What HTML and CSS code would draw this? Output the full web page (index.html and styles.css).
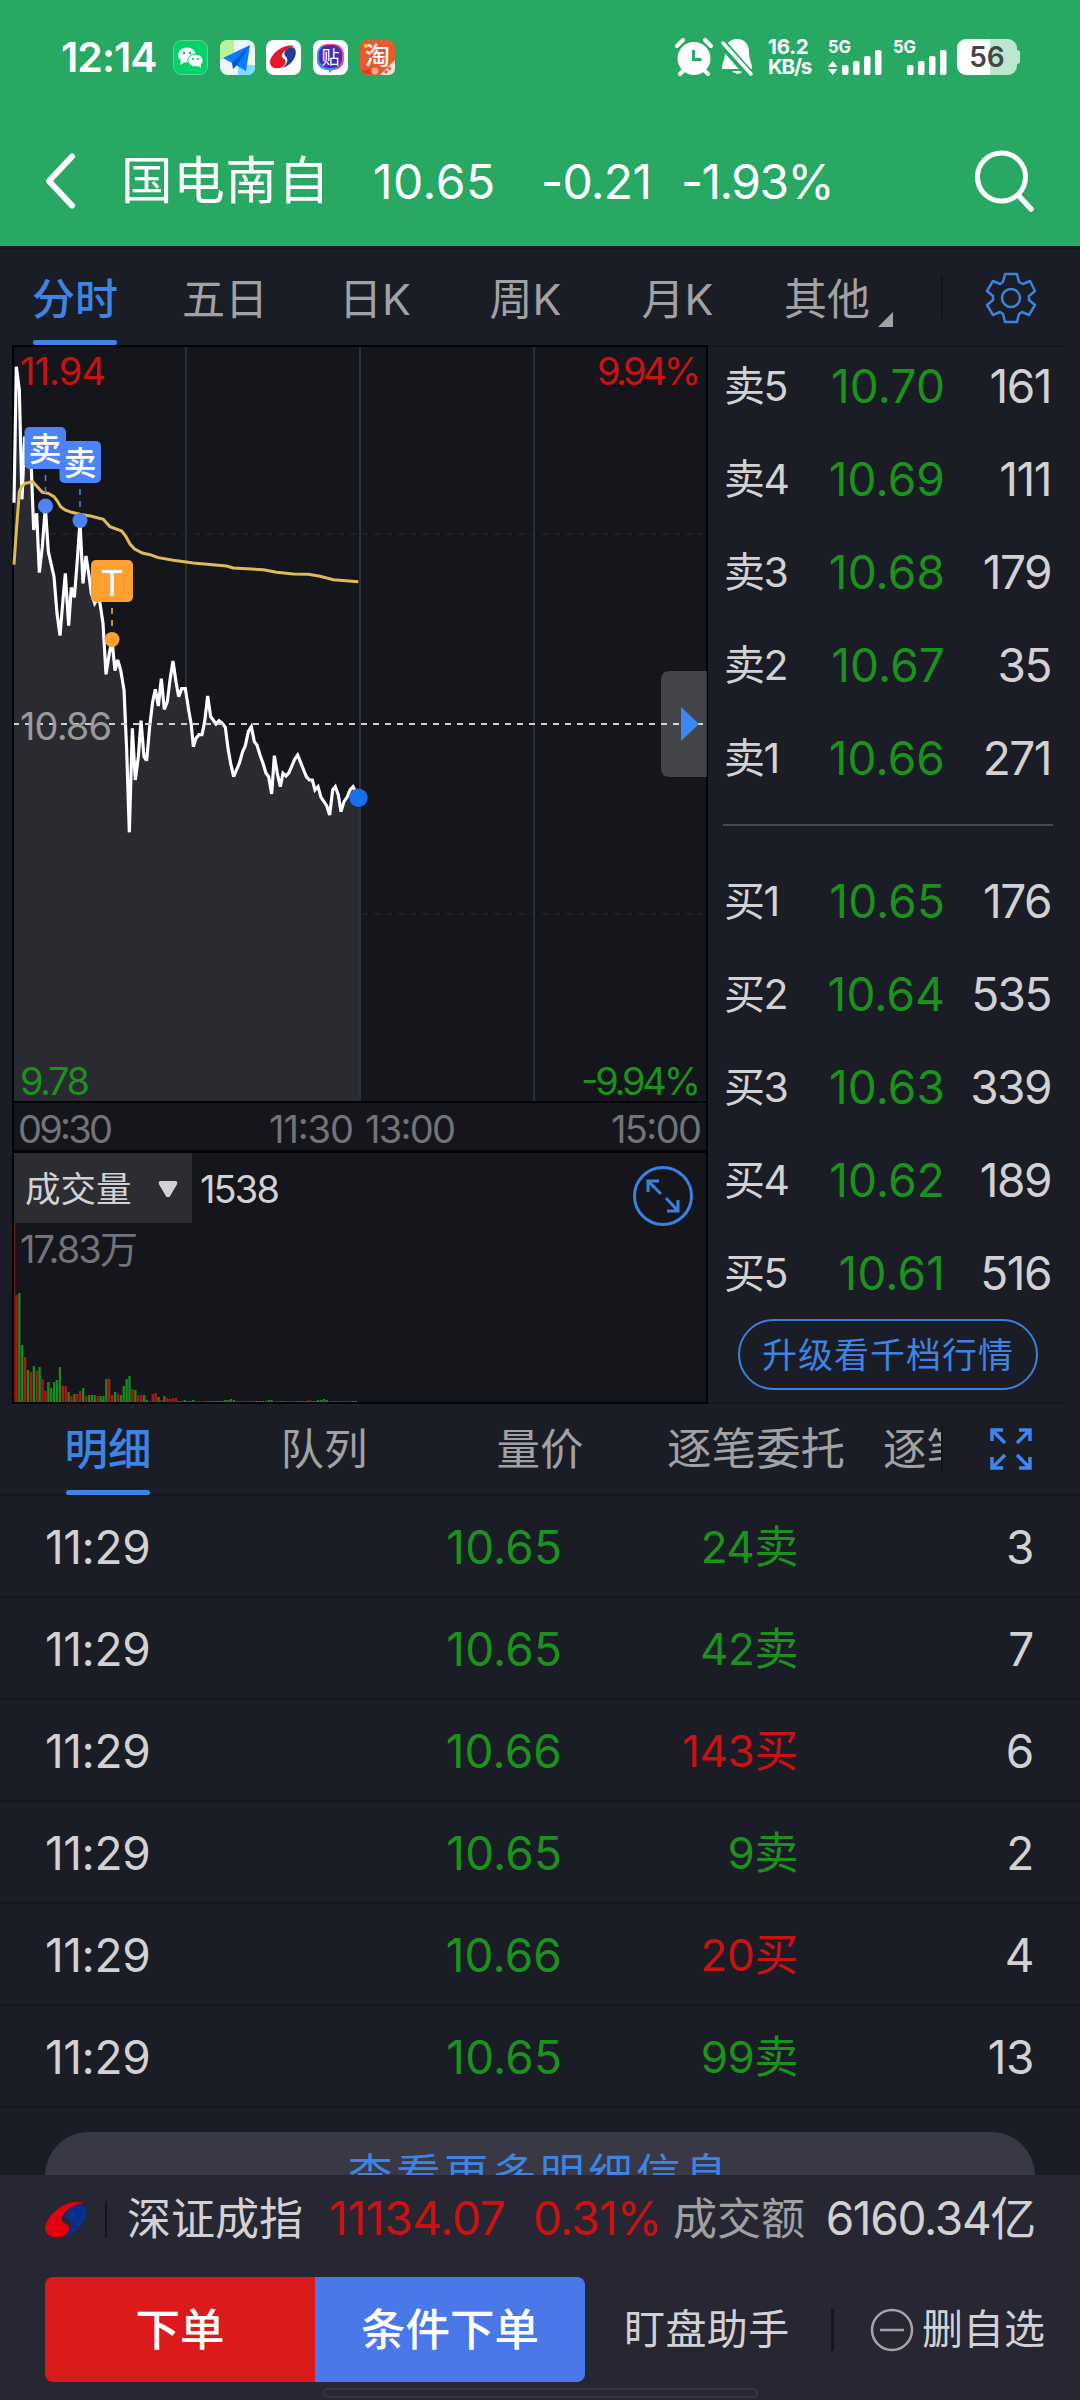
FILE: index.html
```html
<!DOCTYPE html>
<html lang="zh-CN">
<head>
<meta charset="utf-8">
<title>国电南自</title>
<link rel="stylesheet" href="styles.css">
</head>
<body>
<header class="top">
  <div class="status">
    <span class="clock">12:14</span>
    <div class="apps">
      <svg width="35" height="35" viewBox="0 0 35 35"><rect x=".5" y=".5" width="34" height="34" rx="8" fill="#05d16a" stroke="#4fdc93"/><ellipse cx="14" cy="15" rx="9" ry="7.6" fill="#fff"/><path d="M8 20l-1 5 5-3z" fill="#fff"/><ellipse cx="22.500" cy="20.500" rx="7.600" ry="6.400" fill="#fff" stroke="#05d16a"/><path d="M25 26l3 2-.5-4z" fill="#fff"/><g fill="#05b85c"><circle cx="11" cy="13" r="1.200"/><circle cx="17" cy="13" r="1.200"/><circle cx="20" cy="19" r="1"/><circle cx="25" cy="19" r="1"/></g></svg>
      <svg width="35" height="35" viewBox="0 0 35 35"><rect width="35" height="35" rx="8" fill="#eef5f7"/><path d="M8 0H14V14L0 20V8Q0 0 8 0z" fill="#b9f29c"/><path d="M18 25H35V27Q35 35 27 35H18z" fill="#7ddcff"/><path d="M30 5L3 18l9 5 14 8z" fill="#0a7cff"/><path d="M30 5L12 23l1 6 4-4z" fill="#0757c9"/></svg>
      <svg width="35" height="35" viewBox="0 0 35 35"><rect width="35" height="35" rx="8" fill="#fff"/><path d="M29 6C18 3 5 13 4 22c0 8 12 8 15 2 2-4-1-5-3-7-2-4 7-10 13-11z" fill="#e9152b"/><path d="M26 7c8 2 3 18-10 21 5-4 7-8 4-11-4-4 0-9 6-10z" fill="#213c95"/></svg>
      <svg width="35" height="35" viewBox="0 0 35 35"><rect width="35" height="35" rx="8" fill="#fff"/><path d="M14 28h7l-4 5z" fill="#39a0ff"/><rect x="4" y="4" width="27" height="26" rx="10" fill="#ff4f78"/><rect x="4" y="5" width="25" height="25" rx="10" fill="#3b8cff"/><rect x="6" y="5" width="23" height="23" rx="9" fill="#4a2bb5"/><text x="17.500" y="24" text-anchor="middle" class="app-text" font-size="18">贴</text></svg>
      <svg width="35" height="35" viewBox="0 0 35 35"><rect width="35" height="35" rx="8" fill="#e9592b"/><text x="17.500" y="25" text-anchor="middle" class="app-text" font-size="25" font-weight="500">淘</text><path d="M20 35L35 20v8q0 7-7 7z" fill="#f6e3dc"/><path d="M25 33l7-7" stroke="#e2603c" stroke-width="3" stroke-dasharray="3 2"/><path d="M2 31q8-4 18 3H8q-4 0-6-3z" fill="#e8341f"/><circle cx="15" cy="31" r="3.500" fill="#e6ad8c"/><circle cx="6" cy="6" r="2" fill="#ffc638"/></svg>
    </div>
    <div class="sys">
      <svg class="alarm" width="38" height="38" viewBox="0 0 38 38"><circle cx="19" cy="20.500" r="16.500" fill="#fff"/><path d="M2 8l6-6M36 8l-6-6M5 36l4-4M33 36l-4-4" stroke="#fff" stroke-width="4" stroke-linecap="round"/><path d="M18.500 12v9.500h8" fill="none" stroke="#27a863" stroke-width="3.200"/></svg>
      <svg class="bell" width="32" height="38" viewBox="0 0 32 38"><path d="M16 1c8 0 12 6 12 13 0 8 3 10 3 17H1c0-7 3-9 3-17C4 7 8 1 16 1z" fill="#fff"/><path d="M11 33h11q-5 6-11 0z" fill="#fff"/><path d="M-1 3l31 35" stroke="#27a863" stroke-width="9"/><path d="M2 5l28 31" stroke="#fff" stroke-width="3.500" stroke-linecap="round"/></svg>
      <div class="rate"><span>16.2</span><span>KB/s</span></div>
      <svg class="sim" width="54" height="36" viewBox="0 0 54 36"><text x="0" y="14" class="net" textLength="23" lengthAdjust="spacingAndGlyphs">5G</text><path d="M0 28l4.700-6 4.700 6zM0 30l4.700 6 4.700-6z" fill="#fff"/><g fill="#fff"><rect x="14" y="26" width="6.500" height="10" rx="2"/><rect x="25" y="22" width="6.500" height="14" rx="2"/><rect x="36" y="17" width="6.500" height="19" rx="2"/><rect x="47" y="11" width="6.500" height="25" rx="2"/></g></svg>
      <svg class="sim" width="54" height="36" viewBox="0 0 54 36"><text x="0" y="14" class="net" textLength="23" lengthAdjust="spacingAndGlyphs">5G</text><g fill="#fff"><rect x="14" y="26" width="6.500" height="10" rx="2"/><rect x="25" y="22" width="6.500" height="14" rx="2"/><rect x="36" y="17" width="6.500" height="19" rx="2"/><rect x="47" y="11" width="6.500" height="25" rx="2"/></g></svg>
      <div class="battery">56</div>
    </div>
  </div>
  <div class="title">
    <svg class="back" width="32" height="56" viewBox="0 0 32 56"><path d="M27 3.500L4 28l23 24.500" fill="none" stroke="#fff" stroke-width="6" stroke-linecap="round" stroke-linejoin="round"/></svg>
    <span class="name">国电南自</span>
    <span class="t-price">10.65</span>
    <span class="t-chg">-0.21</span>
    <span class="t-pct">-1.93%</span>
    <svg class="search" width="62" height="64" viewBox="0 0 62 64"><circle cx="27.500" cy="28" r="24" fill="none" stroke="#fff" stroke-width="5"/><path d="M45 47l12 13" stroke="#fff" stroke-width="5.500" stroke-linecap="round"/></svg>
  </div>
</header>

<nav class="tabs">
  <span class="tab active">分时</span><span class="tab">五日</span><span class="tab">日K</span><span class="tab">周K</span><span class="tab">月K</span><span class="tab other">其他</span>
  <span class="gear">
    <svg width="50" height="52" viewBox="-25 -26 50 52" fill="none" stroke="#3d82df" stroke-width="2.500" stroke-linejoin="round"><path d="M-6 -24H6L8 -16L12 -14L19 -17L24 -7L18 -2V2L24 7L18 17L11 14L8 16L6 24H-6L-8 16L-11 14L-18 17L-24 7L-18 2V-2L-24 -7L-18 -17L-11 -14L-8 -16Z"/><circle r="9"/></svg>
  </span>
</nav>

<main class="market">
  <div class="charts">
    <svg class="price-chart" width="696" height="806" viewBox="12 345 696 806">
      <rect x="13" y="346" width="694" height="805" fill="#15161b" stroke="#030409" stroke-width="2"/>
      <path d="M186 347V1101M534 347V1101" stroke="#2a2c37" stroke-width="2"/>
      <path d="M14 534H703M14 914H703" stroke="#22242a" stroke-width="1.500" stroke-dasharray="6 6"/>
      <g transform="translate(0 340) scale(.33333)" fill="none" stroke-linejoin="miter">
        <path fill="#2a2b30" d="M42 488 49 80 58 150 66 478 74 290 84 330 94 385 101 570 110 520 118 698 127 620 136 500 145 635 153 670 162 710 171 820 180 887 188 790 196 700 206 857 214 742 223 772 232 660 240 545 249 730 258 648 266 700 274 760 284 790 292 775 300 790 309 850 318 1003 328 940 336 900 345 992 353 960 362 990 372 1050 380 1230 388 1477 397 1165 406 1320 415 1250 423 1142 432 1250 440 1262 449 1160 458 1085 466 1048 475 1098 484 1016 493 1108 502 1085 510 1020 519 963 528 1025 536 1070 545 1046 556 1046 566 1110 574 1155 580 1220 588 1195 606 1184 623 1068 632 1130 648 1152 657 1142 676 1162 684 1225 701 1310 718 1270 736 1217 754 1160 771 1215 798 1300 815 1362 823 1247 841 1340 849 1300 867 1298 893 1245 919 1310 937 1320 945 1350 963 1372 989 1425 998 1350 1006 1340 1023 1415 1032 1385 1059 1340 1080 1373V2283H42z"/>
        <path stroke="#2e313b" stroke-width="6" d="M1080 21V2283"/>
        <path stroke="#fff" stroke-width="9.500" d="M42 488 49 80 58 150 66 478 74 290 84 330 94 385 101 570 110 520 118 698 127 620 136 500 145 635 153 670 162 710 171 820 180 887 188 790 196 700 206 857 214 742 223 772 232 660 240 545 249 730 258 648 266 700 274 760 284 790 292 775 300 790 309 850 318 1003 328 940 336 900 345 992 353 960 362 990 372 1050 380 1230 388 1477 397 1165 406 1320 415 1250 423 1142 432 1250 440 1262 449 1160 458 1085 466 1048 475 1098 484 1016 493 1108 502 1085 510 1020 519 963 528 1025 536 1070 545 1046 556 1046 566 1110 574 1155 580 1220 588 1195 597 1184 606 1184 614 1145 623 1068 632 1130 648 1152 657 1142 667 1150 676 1162 684 1225 692 1270 701 1310 718 1270 728 1235 736 1217 745 1175 754 1160 763 1205 771 1215 780 1245 789 1270 798 1300 806 1310 815 1362 823 1247 832 1300 841 1340 849 1300 858 1308 867 1298 884 1258 893 1245 903 1270 911 1290 919 1310 928 1320 937 1320 945 1350 954 1340 963 1372 972 1385 980 1397 989 1425 998 1350 1006 1340 1015 1365 1023 1415 1032 1385 1041 1372 1050 1350 1059 1340 1067 1355 1075 1373" stroke-miterlimit="3"/>
        <path stroke="#dfbb55" stroke-width="9" d="M42 674 50 560 58 455 66 438 76 430 98 425 112 440 127 457 145 460 162 470 172 483 182 500 195 510 215 517 240 523 275 529 310 538 330 560 365 573 378 590 390 612 404 627 427 639 450 644 475 653 520 661 580 669 680 678 700 684 790 689 830 697 880 702 925 703 960 709 1000 719 1075 725"/>
      </g>
      <path d="M14 724H703" stroke="#cfcfd2" stroke-width="2" stroke-dasharray="6 6" stroke-dashoffset="1"/>
      <g stroke="#4a7ee0" stroke-width="1.600" stroke-dasharray="6 6"><path d="M45.500 475V493M80 489V507"/><path d="M112 608V627" stroke="#c98a3c" stroke-width="2"/></g>
      <g fill="#4c84f7"><circle cx="45.500" cy="506" r="7.500"/><circle cx="80" cy="520.500" r="7.500"/><rect x="24.500" y="427" width="41.500" height="42" rx="5"/><rect x="59.500" y="441" width="41.500" height="42" rx="5"/></g>
      <g fill="#ff9f2e"><circle cx="112" cy="639.500" r="7.500"/><rect x="91" y="560" width="42" height="42" rx="5"/></g>
      <text class="tag" x="45" y="461">卖</text><text class="tag" x="80" y="475">卖</text>
      <text class="tag tag-t" x="112" y="596">T</text>
      <circle cx="358.500" cy="797.700" r="9.200" fill="#186ff2"/>
      <path d="M12 1102H708" stroke="#030409" stroke-width="2"/>
      <path d="M707 671H670q-9 0-9 9v88q0 9 9 9H707z" fill="#fff" fill-opacity=".2"/>
      <path d="M681 707V741L699 724z" fill="#3a87f5"/>
      <g class="axis">
        <text class="up" x="20" y="384.500" textLength="86">11.94</text>
        <text class="up" x="597" y="384.500" textLength="104">9.94%</text>
        <text class="mid" x="20" y="740" textLength="92">10.86</text>
        <text class="down" x="20" y="1095" textLength="70">9.78</text>
        <text class="down" x="581" y="1095" textLength="120">-9.94%</text>
        <text x="18" y="1143" textLength="95">09:30</text>
        <text x="269" y="1143" textLength="85">11:30</text>
        <text x="365" y="1143" textLength="91">13:00</text>
        <text x="611" y="1143" textLength="91">15:00</text>
      </g>
    </svg>
    <svg class="vol-chart" width="696" height="253" viewBox="12 1151 696 253">
      <rect x="13" y="1152" width="694" height="251" fill="#15161b" stroke="#030409" stroke-width="2"/>
      <rect x="14" y="1153" width="178" height="70" fill="#2c2d32"/>
      <text class="cjk light" x="25" y="1202" font-size="35.500">成交量</text>
      <path d="M161 1182h14q2 0 1 2l-7 12h-2l-7-12q-1-2 1-2z" fill="#d2d2d4" stroke="#d2d2d4" stroke-width="2"/>
      <text class="num light" x="200" y="1203" textLength="80">1538</text>
      <text class="num dim" x="20" y="1263" textLength="118">17.83万</text>
      <g fill="none" stroke="#3a80dd" stroke-width="3"><circle cx="663" cy="1196" r="28.500"/><path d="M648 1192V1181H659M648 1181L661 1194M666 1198L678 1211M678 1200V1211H667"/></g>
      <g id="bars"></g>
    </svg>
  </div>

  <div class="book">
    <div class="row"><span>卖5</span><b>10.70</b><i>161</i></div>
    <div class="row"><span>卖4</span><b>10.69</b><i>111</i></div>
    <div class="row"><span>卖3</span><b>10.68</b><i>179</i></div>
    <div class="row"><span>卖2</span><b>10.67</b><i>35</i></div>
    <div class="row"><span>卖1</span><b>10.66</b><i>271</i></div>
    <hr>
    <div class="row"><span>买1</span><b>10.65</b><i>176</i></div>
    <div class="row"><span>买2</span><b>10.64</b><i>535</i></div>
    <div class="row"><span>买3</span><b>10.63</b><i>339</i></div>
    <div class="row"><span>买4</span><b>10.62</b><i>189</i></div>
    <div class="row"><span>买5</span><b>10.61</b><i>516</i></div>
    <div class="upgrade">升级看千档行情</div>
  </div>
</main>

<nav class="dtabs">
  <span class="tab active">明细</span><span class="tab">队列</span><span class="tab">量价</span><span class="tab wide">逐笔委托</span><span class="tab cut">逐笔</span>
  <svg class="expand" width="44" height="44" viewBox="0 0 44 44" fill="none" stroke="#3d87f0" stroke-width="3.500"><path d="M3 14V3H14M3 3L16 16M30 3H41V14M41 3L28 16M3 30V41H14M3 41L16 28M30 41H41V30M41 41L28 28"/></svg>
</nav>

<section class="ticks">
  <div class="tick"><span>11:29</span><b>10.65</b><b>24卖</b><i>3</i></div>
  <div class="tick"><span>11:29</span><b>10.65</b><b>42卖</b><i>7</i></div>
  <div class="tick"><span>11:29</span><b>10.66</b><b class="buy">143买</b><i>6</i></div>
  <div class="tick"><span>11:29</span><b>10.65</b><b>9卖</b><i>2</i></div>
  <div class="tick"><span>11:29</span><b>10.66</b><b class="buy">20买</b><i>4</i></div>
  <div class="tick"><span>11:29</span><b>10.65</b><b>99卖</b><i>13</i></div>
  <div class="more">查看更多明细信息</div>
</section>

<footer class="bottom">
  <div class="index">
    <svg width="42" height="38" viewBox="0 0 42 38"><path d="M39 3C25-3 3 12 0 27c0 13 20 14 24 3 1-5-2-5-6-8-5-6 8-18 21-19z" fill="#e3000f"/><path d="M37 4c10 4 3 26-17 33 6-6 9-14 4-17-9-2-1-14 13-16z" fill="#06308f"/></svg>
    <span class="bar"></span>
    <span class="ix-name">深证成指</span><span class="ix-val">11134.07</span><span class="ix-pct">0.31%</span><span class="ix-lab">成交额</span><span class="ix-amt">6160.34亿</span>
  </div>
  <div class="actions">
    <span class="btn order">下单</span><span class="btn cond">条件下单</span>
    <span class="watch">盯盘助手</span><span class="bar"></span>
    <span class="remove"><svg width="44" height="44" viewBox="0 0 44 44" fill="none" stroke="#a4a4a8" stroke-width="2.500"><circle cx="22" cy="22" r="20"/><path d="M10 22H34"/></svg>删自选</span>
  </div>
  <div class="home"></div>
</footer>
<script src="bars.js"></script>
</body>
</html>
```
FILE: styles.css
```css
* { box-sizing: border-box; }
body {
  margin: 0; width: 1080px; height: 2400px; overflow: hidden;
  display: flex; flex-direction: column;
  background: #1b1d26; color: #d2d2d4;
  font-family: Inter, "Noto Sans CJK SC", sans-serif;
  line-height: 1.2;
  white-space: nowrap;
}
b, i { font-weight: 400; font-style: normal; }
svg { display: block; flex: none; overflow: visible; }

.top { height: 246px; flex: none; background: #27a863; color: #fff; }
.status { height: 114px; padding: 0 60px 0 61px; display: flex; align-items: center; }
.clock { width: 112px; font-size: 41px; font-weight: 600; letter-spacing: -1px; line-height: 114px; }
.apps { display: flex; gap: 11.700px; }
.app-text { fill: #fff; font-family: "Noto Sans CJK SC", sans-serif; }
.sys { margin-left: auto; display: flex; align-items: center; }
.bell { margin-left: 8px; }
.rate { width: 43px; margin-left: 15px; display: flex; flex-direction: column; font-size: 20.500px; font-weight: 700; line-height: 20px; letter-spacing: -1.200px; }
.rate span:first-child { letter-spacing: -.2px; }
.sim { margin-left: 17px; }
.sim + .sim { margin-left: 11px; }
.net { font-size: 18px; font-weight: 700; fill: #fff; }
.battery {
  position: relative; width: 60px; height: 36px; margin: 0 3px 0 10px; border-radius: 9px;
  background: linear-gradient(90deg, #fff 55%, #bde6cf 55%);
  color: #454545; font-size: 28px; font-weight: 600; line-height: 36px; text-align: center;
}
.battery::after { content: ""; position: absolute; right: -3px; top: 11px; width: 3px; height: 14px; border-radius: 0 3px 3px 0; background: #bde6cf; }

.title { height: 132px; display: flex; align-items: center; padding: 2px 44px 0 45px; font-size: 48px; }
.name { width: 252px; margin-left: 44px; font-size: 51.500px; letter-spacing: .8px; }
.t-price { width: 168px; letter-spacing: .5px; }
.t-chg { width: 140px; letter-spacing: -.7px; }
.t-pct { letter-spacing: -1.600px; }
.title .t-chg, .title .t-price, .title .t-pct { padding-top: 2px; }
.search { margin-left: auto; }

.tabs { position: relative; z-index: 1; height: 99px; flex: none; display: grid; grid-template-columns: 150px 150px 150px 151px 153px 174px 1fr; grid-template-rows: 96px; line-height: 101px; font-size: 43px; color: #a2a2a4; border-top: 3px solid #14171c; }
.tab { text-align: center; }
.active { color: #3d84e6; font-weight: 500; display: flex; flex-direction: column; align-items: center; position: relative; }
.active::after { content: ""; position: absolute; bottom: 0; width: 84px; height: 5px; border-radius: 2px; background: #3d84e6; }
.tab.other { text-align: left; padding-left: 30px; }
.other::after { content: ""; display: inline-block; margin: 0 0 -12px 8px; border-left: 15px solid transparent; border-bottom: 15px solid #a2a2a4; }
.gear { display: flex; align-items: center; justify-content: center; padding: 2px 0 0 0; height: 96px; margin-left: 13px; margin-right: -1px; position: relative; }
.gear::before { content: ""; width: 2px; height: 44px; background: #14151b; position: absolute; left: 0; top: 26px; }

.market { height: 1059px; flex: none; display: flex; padding-left: 12px; }
.charts { width: 696px; }
.axis text, .num { font-size: 38px; }
.axis text { fill: #737378; }
.axis .up { fill: #cb1111; }
.axis .down { fill: #1a921c; }
.axis .mid { fill: #9a9a9d; }
.tag { fill: #fff; font-size: 33px; font-weight: 500; text-anchor: middle; font-family: "Noto Sans CJK SC", sans-serif; }
.tag-t { font-family: Inter, sans-serif; font-size: 36px; font-weight: 400; }
.light { fill: #d2d2d4; }
.dim { fill: #737378; }
.red { fill: #b91414; }
.green { fill: #188c1c; }

.book { width: 360px; padding: 0 12px 0 15px; border-top: 2px solid #15171d; border-bottom: 2px solid #15171d; }
.row { height: 93px; margin: 0 5px 0 1px; display: grid; grid-template-columns: 70px 151px 1fr; align-items: center; font-size: 46px; position: relative; top: -7px; }
.row span { font-size: 41px; letter-spacing: -1.500px; }
.row b { text-align: right; letter-spacing: .1px; }
.row i { text-align: right; letter-spacing: -1.500px; }
.row b, .tick b { color: #1a921c; }
.book hr { margin: 12px 3px 36px 0; border: 0; height: 2px; background: #454754; }
.upgrade { width: 300px; height: 71px; margin: -8px 0 0 15px; border: 2px solid #3d7fdc; border-radius: 36px; color: #3d84e6; font-size: 35px; letter-spacing: 1px; line-height: 69px; text-align: center; }

.dtabs { height: 92px; flex: none; display: flex; align-items: center; font-size: 43.500px; color: #a2a2a4; border-bottom: 2px solid #15161d; }
.dtabs .tab { width: 216px; line-height: 92px; }
.dtabs .wide { font-size: 44.500px; }
.dtabs .cut { width: 79px; text-align: left; overflow: hidden; padding-left: 19px; margin-right: 46px; border-right: 2px solid #14151b; line-height: 46px; height: 46px; }

.ticks { height: 679px; flex: none; overflow: hidden; }
.tick { height: 102px; padding: 3px 46px 0 45px; border-bottom: 2px solid #15161d; display: grid; grid-template-columns: 200px 317px 236px 1fr; align-items: center; font-size: 46px; letter-spacing: -.4px; }
.tick b, .tick i { text-align: right; }
.tick b:nth-child(2) { letter-spacing: .1px; }
.tick b:nth-child(3) { font-size: 44px; }
.tick .buy { color: #cb1111; }
.more { height: 88px; margin: 24px 45px 0; border-radius: 44px; background: #383944; color: #3d84e6; text-align: center; font-size: 44.500px; letter-spacing: 3.500px; line-height: 87px; }

.bottom { height: 225px; flex: none; background: #262732; position: relative; }
.index { height: 102px; padding: 0 45px 14px 45px; display: flex; align-items: center; font-size: 46px; letter-spacing: -1.300px; }
.bar { width: 2px; height: 37px; background: #15161d; }
.index .bar { margin: 0 20px 0 18px; }
.index .ix-name, .index .ix-lab { font-size: 44px; letter-spacing: 0; }
.ix-name { width: 202px; }
.ix-val { width: 204px; color: #cb1111; letter-spacing: -.3px; }
.ix-pct { width: 140px; color: #cb1111; letter-spacing: -.8px; }
.ix-lab { width: 152px; color: #a0a0a3; }
.ix-amt { flex: 1; text-align: right; }
.actions { height: 105px; padding-left: 45px; display: flex; align-items: center; font-size: 41px; }
.btn { width: 270px; line-height: 107px; height: 105px; color: #fff; text-align: center; font-size: 44.500px; font-weight: 500; }
.order { background: #db1b1b; border-radius: 8px 0 0 8px; }
.cond { background: #4b78e9; border-radius: 0 8px 8px 0; }
.watch { width: 207px; margin-left: 39px; letter-spacing: .4px; }
.actions .bar { height: 42px; width: 3px; }
.remove { display: flex; align-items: center; gap: 8px; margin-left: 36px; }
.home { width: 435px; height: 10px; margin: 6px auto 0; border: 2px solid #363741; border-radius: 5px; }
```
FILE: bars.js
```js
// Minute volumes as colour + height in px; the remaining minutes are flat.
const data = "r107 g109 g57 r45 g32 r30 g36 r31 g35 r23 r11 g20 g14 g20 g22 g35 r16 r16 g10 r6 g8 r8 r11 g14 r6 g7 g7 g7 r6 g6 g6 g23 r23 r7 g10 r8 g7 g16 g23 g26 r13 g12 r7 r7 g7 g2 r1 r8 r9 g5 r2 g6 r4 r3 r4 r4 g1 r1 g2 g1 g1 g2 r1 r1 r1 r1 g1 g1 g1 g1 g1 g1 g2 g2 g3 g2 r1 r1 r1 r1 r1 r1 g1 g1 g1 g1 g1 g2 g2 r1 r1 g1 g1 r1 r1 r1 r1 g1 g1 g1 g1 r2 g1 g1 g2 g2 g3 g2 r1 r1 g1 r1 r1 r1 r1 r1 g1 g1".split(" ");
let out = '<rect class="red" opacity=".6" x="14" y="1223" width="1.4" height="179"/>';
data.forEach((d, i) => {
  const h = +d.slice(1);
  out += `<rect class="${d[0] === "r" ? "red" : "green"}" x="${15.3 + i * 2.9}" y="${1402 - h}" width="2.3" height="${h}"/>`;
});
document.getElementById("bars").innerHTML = out;
```
